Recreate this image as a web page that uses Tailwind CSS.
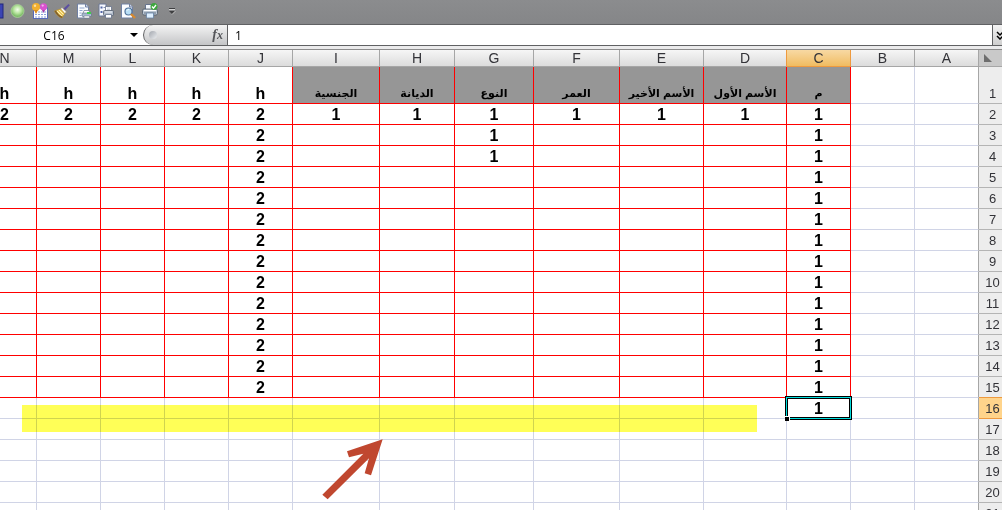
<!DOCTYPE html>
<html lang="ar">
<head>
  <meta charset="UTF-8">
  <meta name="viewport" content="width=device-width, initial-scale=1.0">
  <title>C16</title>
  <script src="https://cdn.jsdelivr.net/npm/@tailwindcss/browser@4"></script>
</head>
<body class="flex h-screen flex-col overflow-hidden bg-white font-['Liberation_Sans','DejaVu_Sans',sans-serif] text-black">
  <!-- Quick access toolbar -->
  <header class="-ml-[15px] flex h-6 shrink-0 items-center overflow-hidden bg-linear-to-b from-[#8b8c8e] to-[#858688] pb-0.5">
    <button class="flex w-[22px] shrink-0 justify-center" aria-label="Save">
      <svg width="16" height="16" viewBox="0 0 16 16"><rect x="1" y="1" width="14" height="14" fill="#3b44b4" stroke="#22277c"/><rect x="4" y="1" width="8" height="6" fill="#e4e8fa"/><rect x="5" y="10" width="6" height="5" fill="#c3cbee"/></svg>
    </button>
    <button class="flex w-[22px] shrink-0 justify-center" aria-label="Record">
      <svg width="16" height="16" viewBox="0 0 16 16"><defs><radialGradient id="ball" cx=".5" cy=".4"><stop offset="0" stop-color="#f3fdec"/><stop offset=".55" stop-color="#b9e6a0"/><stop offset="1" stop-color="#7fbd6a"/></radialGradient></defs><circle cx="7.500" cy="8" r="6.500" fill="url(#ball)" stroke="#a9cf9b" stroke-width=".8"/></svg>
    </button>
    <button class="flex w-[22px] shrink-0 justify-center" aria-label="Sort and filter">
      <svg width="16" height="16" viewBox="0 0 16 16"><rect x="1.500" y="5" width="14" height="10.500" fill="#fff" stroke="#5869b8"/><path d="M3 9h11M3 11.500h11M3 14h11" stroke="#8c9fd8" stroke-width="1" stroke-dasharray="2 1"/><circle cx="4" cy="4" r="4" fill="#f2b02e"/><path d="M2 7l2 4 2-4z" fill="#d98b1b"/><circle cx="11.500" cy="3.800" r="3.600" fill="#d951cf"/><path d="M10 7l1.500 3 1.500-3z" fill="#a93ba6"/><circle cx="3" cy="2.800" r="1.200" fill="#fbe0a0"/><circle cx="10.700" cy="2.600" r="1.100" fill="#f3b2ee"/></svg>
    </button>
    <button class="flex w-[22px] shrink-0 justify-center" aria-label="Format painter">
      <svg width="16" height="16" viewBox="0 0 16 16"><path d="M14.500 1l1.300 1.300-5 5.500L9 6z" fill="#5b4fa0"/><path d="M8 4.500l4.500 4.500-1.800 1.500L6.500 6z" fill="#fff" stroke="#9a8c5c" stroke-width=".6"/><path d="M6.500 6l4.200 4.500L8 15c-3-.6-6-3.500-7.500-7z" fill="#edc95a" stroke="#b98e2c" stroke-width=".6"/><path d="M3 8l5 5M5 7l4.500 4.500" stroke="#fff3b8"/><path d="M.5 8c1.500 3.500 4.500 6.400 7.500 7l.7-1.200C6 13 3.500 10.500 2 7.600z" fill="#81602a"/></svg>
    </button>
    <button class="flex w-[22px] shrink-0 justify-center" aria-label="Print preview">
      <svg width="16" height="16" viewBox="0 0 16 16"><path d="M1.500 1h8l3 3v11h-11z" fill="#fafcff" stroke="#7181a3"/><path d="M9.500 1v3h3" fill="#cbd6ec" stroke="#7181a3"/><path d="M3.500 5h5M3.500 7.500h3M3.500 10h2M3.500 12.500h2" stroke="#91a6cf"/><path d="M8 7.500h5l1 3H7z" fill="#fff" stroke="#69778f" stroke-width=".7"/><rect x="6" y="10" width="9.500" height="3.500" rx="1" fill="#a7b9cd" stroke="#5c6d85" stroke-width=".6"/><rect x="11" y="9" width="4" height="2" fill="#3ecf4c"/><path d="M8 13h5.500v2H8z" fill="#fff" stroke="#6c7689" stroke-width=".5"/></svg>
    </button>
    <button class="flex w-[22px] shrink-0 justify-center" aria-label="Print">
      <svg width="16" height="16" viewBox="0 0 16 16"><path d="M1 1h7v12H1z" fill="#f7f9ff" stroke="#6a7695"/><path d="M2.500 3.500h2v2h-2zM2.500 8h2v2h-2z" fill="#5267a4"/><path d="M5.500 4.500h2" stroke="#8793b1"/><path d="M7.500 3.500h6V8h-6z" fill="#fff" stroke="#66728c" stroke-width=".8"/><path d="M9 5h3M9 6.500h3" stroke="#aab3c5" stroke-width=".6"/><rect x="5.500" y="7.500" width="10" height="5" rx="1" fill="#b5bfcc" stroke="#56606f" stroke-width=".8"/><path d="M7 9h7" stroke="#f1f4f9"/><path d="M7.500 11.500h6V15h-6z" fill="#fff" stroke="#66728c" stroke-width=".8"/></svg>
    </button>
    <button class="flex w-[22px] shrink-0 justify-center" aria-label="Zoom page">
      <svg width="16" height="16" viewBox="0 0 16 16"><path d="M1.500 1h8l3 3v11h-11z" fill="#fafcff" stroke="#7181a3"/><path d="M9.500 1v3h3" fill="#cbd6ec" stroke="#7181a3"/><circle cx="8.500" cy="8.500" r="3.500" fill="#b9dff7" stroke="#51749c" stroke-width="1.200"/><path d="M7 7.500c.5-1 1.500-1 2-.8" stroke="#fff" fill="none"/><path d="M11 11l4 4" stroke="#d88a2e" stroke-width="2.400"/></svg>
    </button>
    <button class="flex w-[22px] shrink-0 justify-center" aria-label="Quick print">
      <svg width="16" height="16" viewBox="0 0 16 16"><path d="M3.500 1.500h8V7h-8z" fill="#f5f9ff" stroke="#67748d"/><rect x=".5" y="6" width="15" height="6" rx="1.500" fill="#bcc7d3" stroke="#4f5a68" stroke-width=".8"/><path d="M2 7.500h12" stroke="#fff"/><path d="M2 10h12" stroke="#66768a"/><path d="M4.500 10h7v5h-7z" fill="#dff0ff" stroke="#6884a4" stroke-width=".8"/><circle cx="12" cy="3.500" r="3.500" fill="#3da63d"/><path d="M10 3.500l1.500 1.700L14 2" stroke="#fff" stroke-width="1.300" fill="none"/></svg>
    </button>
    <button class="flex w-[22px] shrink-0 justify-center" aria-label="Customize toolbar">
      <svg width="8" height="8" viewBox="0 0 8 8"><path d="M1 1.500h6" stroke="#3e3f41"/><path d="M1 2.500h6" stroke="#d5d5d5"/><path d="M1 4h6L4 7z" fill="#3e3f41"/><path d="M4 7.500L7.500 4" stroke="#d5d5d5" stroke-width=".7"/></svg>
    </button>
  </header>

  <!-- Formula bar -->
  <div class="flex h-[22px] shrink-0 border-y border-[#606163] bg-white font-['Open_Sans','Noto_Sans',sans-serif] text-xs">
    <input type="text" value="C16" aria-label="Name box" class="w-[108px] bg-transparent pt-0.5 text-center outline-none">
    <button class="flex w-[35px] items-center justify-end pr-[5px]" aria-label="Name list">
      <svg width="8" height="4" viewBox="0 0 8 4"><path d="M0 0h8L4 4z" fill="#000"/></svg>
    </button>
    <div class="flex w-[85px] items-center justify-between rounded-l-full border-r border-l border-[#606163] bg-linear-to-b from-[#f4f4f4] to-[#c4c5c7] pr-1 pl-[5px]">
      <span class="size-2 rounded-full bg-linear-to-br from-[#a3a7ae] to-[#eceef0]"></span>
      <button class="font-['Liberation_Serif',serif] text-sm leading-none font-bold text-[#55565a] italic" aria-label="Insert function">f<span class="text-xs">x</span></button>
    </div>
    <input type="text" value="1" aria-label="Formula" class="min-w-0 flex-1 bg-transparent pt-0.5 pl-[7px] outline-none">
    <button class="flex w-[10px] items-center overflow-hidden border-l border-[#606163] bg-linear-to-b from-[#f2f2f2] to-[#cfcfcf] pl-[3px]" aria-label="Expand formula bar">
      <svg class="shrink-0" width="8" height="9" viewBox="0 0 8 9" fill="none" stroke="#000" stroke-width="1.500"><path d="M1 1l3 3 3-3M1 5l3 3 3-3"/></svg>
    </button>
  </div>
  <div class="h-1 shrink-0 border-b border-[#8c8c8c] bg-[#ebebec]"></div>

  <!-- Worksheet, laid out right to left -->
  <main dir="rtl" class="relative min-h-0 flex-1 overflow-hidden">
    <table class="-mr-1 w-[1033px] table-fixed border-separate border-spacing-0">
      <colgroup>
        <col class="w-[27px]">
        <col class="w-16"><col class="w-16"><col class="w-16">
        <col class="w-[83px]"><col class="w-[84px]"><col class="w-[86px]"><col class="w-[79px]"><col class="w-[75px]"><col class="w-[87px]">
        <col class="w-16"><col class="w-16"><col class="w-16"><col class="w-16"><col class="w-16">
      </colgroup>
      <thead>
        <tr id="letters" class="h-[17px]"></tr>
      </thead>
      <tbody id="rows"></tbody>
    </table>

    <!-- Highlighter and arrow drawn over the sheet -->
    <div class="absolute top-[355px] right-[245px] h-[27px] w-[735px] bg-[#ffff57] mix-blend-multiply"></div>
    <svg class="absolute top-[388px] right-[617px]" width="63" height="63" viewBox="66 174 189 189"><path d="M248 178L141 214L147 232L190 221L67 344L83 358L207 235L194 280L213 286Z" fill="#c0472f"/></svg>
  </main>

  <script>
    const letters = 'ABCDEFGHIJKLMN'.split('');
    const titles = { C: 'م', D: 'الأسم الأول', E: 'الأسم الأخير', F: 'العمر', G: 'النوع', H: 'الديانة', I: 'الجنسية' };

    function cellText(col, row) {
      if (row === 1) return titles[col] || (col >= 'J' ? 'h' : '');
      if (col === 'C') return row <= 16 ? '1' : '';
      if (row > 15) return '';
      if (col === 'J') return '2';
      if (row === 2) return col > 'J' ? '2' : (col >= 'D' ? '1' : '');
      return col === 'G' && row <= 4 ? '1' : '';
    }

    // column letters
    let head = '<th class="border-b border-[#a6a6a6] bg-[#c9c9c9] p-0" aria-label="Select all"><svg class="mr-[14px]" width="8" height="8" viewBox="0 0 8 8"><path d="M0 0v8h8z" fill="#6d6d6d"/></svg></th>';
    for (const c of letters) {
      const look = c === 'C'
        ? 'border-[#ee9a3f] bg-linear-to-b from-[#f8d9a3] to-[#f0bc60]'
        : c === 'D'
          ? 'border-b-[#a6a6a6] border-r-[#ee9a3f] bg-linear-to-b from-[#f6f6f6] to-[#dcdcdc]'
          : 'border-[#a6a6a6] bg-linear-to-b from-[#f6f6f6] to-[#dcdcdc]';
      head += `<th scope="col" class="border-r border-b p-0 text-sm leading-4 font-normal text-[#333338] ${look}">${c}</th>`;
    }
    document.getElementById('letters').innerHTML = head;

    // numbered rows
    let body = '';
    for (let r = 1; r <= 21; r++) {
      const side = r === 16
        ? 'border-[#ee9a3f] bg-[#ffd48b]'
        : r === 15 ? 'border-b-[#ee9a3f] bg-[#ededed]' : 'border-[#b4b4b4] bg-[#ededed]';
      body += `<tr class="${r === 1 ? 'h-[37px]' : 'h-[21px]'}"><th scope="row" class="border-b p-0 text-center align-bottom text-[13px] leading-[18px] font-normal text-[#333338] ${side}">${r}</th>`;
      for (const c of letters) {
        const boxed = c >= 'C' && r <= 15;
        const line = boxed ? 'border-[#ff0000]' : c === 'A' ? 'border-b-[#d0d4e6] border-r-[#a6a6a6]' : 'border-[#d0d4e6]';
        const fill = r === 1 && titles[c] ? 'bg-[#969696] text-[11px] leading-5' : 'text-base leading-[18px]';
        const active = c === 'C' && r === 16
          ? '<span class="absolute -inset-[2px] z-10 border border-black"><span class="block size-full border border-[#00dede]"><span class="block size-full border border-black"></span></span><span class="absolute -bottom-[2px] -left-[1px] size-[5px] border-t border-r border-white bg-black"></span></span>'
          : '';
        body += `<td class="border-r border-b p-0 text-center align-bottom font-bold whitespace-nowrap ${active ? 'relative' : ''} ${line} ${fill}">${cellText(c, r)}${active}</td>`;
      }
      body += '</tr>';
    }
    document.getElementById('rows').innerHTML = body;
  </script>
</body>
</html>
